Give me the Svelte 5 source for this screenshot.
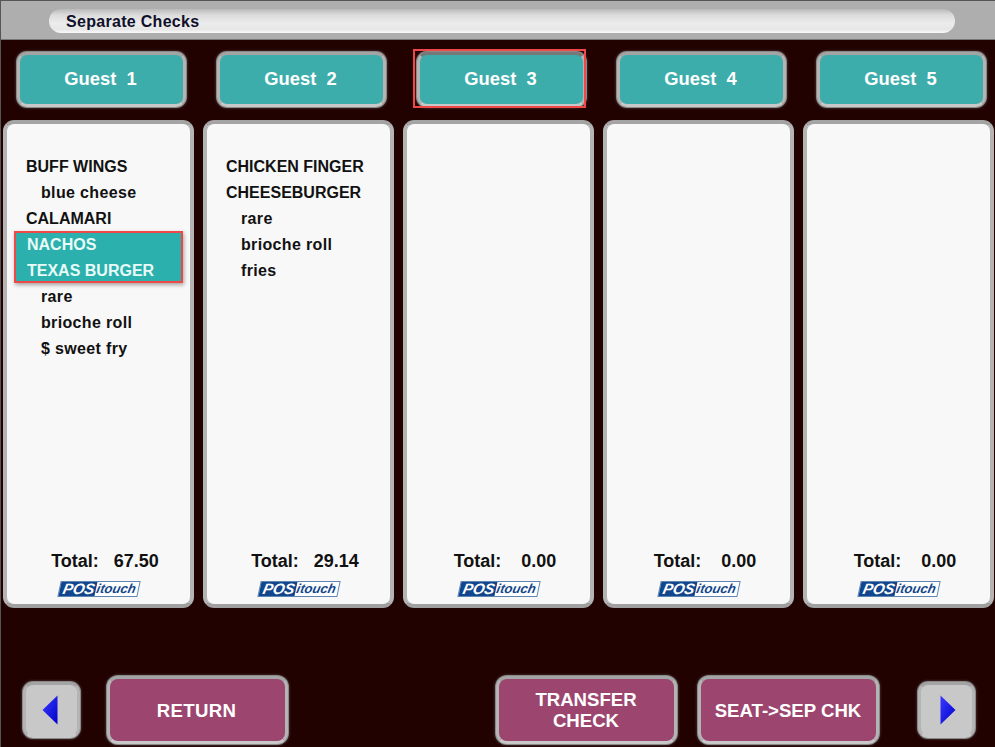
<script lang="ts">
    interface Item { name: string; mod?: boolean; sel?: boolean; }

    const guests: { name: string; total: string; items: Item[] }[] = [
        {
            name: '1', total: '67.50', items: [
                { name: 'BUFF WINGS' },
                { name: 'blue cheese', mod: true },
                { name: 'CALAMARI' },
                { name: 'NACHOS', sel: true },
                { name: 'TEXAS BURGER', sel: true },
                { name: 'rare', mod: true },
                { name: 'brioche roll', mod: true },
                { name: '$ sweet fry', mod: true },
            ]
        },
        {
            name: '2', total: '29.14', items: [
                { name: 'CHICKEN FINGER' },
                { name: 'CHEESEBURGER' },
                { name: 'rare', mod: true },
                { name: 'brioche roll', mod: true },
                { name: 'fries', mod: true },
            ]
        },
        { name: '3', total: '0.00', items: [] },
        { name: '4', total: '0.00', items: [] },
        { name: '5', total: '0.00', items: [] },
    ];

    const activeGuest = '3';
</script>

<div class="screen">
    <header class="titlebar">
        <div class="title">Separate Checks</div>
    </header>

    <div class="guests">
        {#each guests as g}
            <button class="btn guest {g.name === activeGuest ? 'active' : ''}">Guest&nbsp;&nbsp;{g.name}</button>
        {/each}
    </div>

    <div class="cards">
        {#each guests as g}
            <section class="card">
                <div class="items">
                    {#each g.items as item, i}
                        {#if item.sel && g.items[i - 1]?.sel}
                            <!-- drawn with the first selected row -->
                        {:else if item.sel}
                            <div class="selected">
                                {#each g.items.filter((x) => x.sel) as s}
                                    <div class="row">{s.name}</div>
                                {/each}
                            </div>
                        {:else}
                            <div class="row {item.mod ? 'mod' : ''}">{item.name}</div>
                        {/if}
                    {/each}
                </div>
                <div class="total">
                    <span class="lbl">Total:</span>
                    <span class="val">{g.total}</span>
                </div>
                <div class="logo"><span class="pos">POS</span><span class="touch">itouch</span></div>
            </section>
        {/each}
    </div>

    <footer class="actions">
        <button class="btn nav prev" aria-label="Previous">
            <svg width="16" height="30" viewBox="0 0 16 30"><path d="M15.5 0.5 V29.5 L0.5 15 Z" fill="url(#arrowL)" /><defs><linearGradient id="arrowL" x1="0" y1="0" x2="1" y2="1"><stop offset="0" stop-color="#3a3aff" /><stop offset="1" stop-color="#0000c8" /></linearGradient></defs></svg>
        </button>
        <button class="btn action return">RETURN</button>
        <button class="btn action transfer">TRANSFER<br />CHECK</button>
        <button class="btn action seat">SEAT-&gt;SEP CHK</button>
        <button class="btn nav next" aria-label="Next">
            <svg width="16" height="30" viewBox="0 0 16 30"><path d="M0.5 0.5 V29.5 L15.5 15 Z" fill="url(#arrowR)" /><defs><linearGradient id="arrowR" x1="0" y1="0" x2="1" y2="1"><stop offset="0" stop-color="#3a3aff" /><stop offset="1" stop-color="#0000c8" /></linearGradient></defs></svg>
        </button>
    </footer>
</div>

<style>
    :global(body) {
        margin: 0;
        background: #210200;
    }

    .screen {
        width: 995px;
        height: 747px;
        box-sizing: border-box;
        background: #210200;
        border-left: 1px solid #555;
        font-family: "Liberation Sans", Arial, sans-serif;
        overflow: hidden;
        display: flex;
        flex-direction: column;
    }

    .titlebar {
        height: 40px;
        box-sizing: border-box;
        flex: none;
        background: #aeaeae;
        border-top: 1px solid #555;
        border-bottom: 1px solid #777;
        padding: 8px 40px 6px 48px;
    }

    .title {
        height: 100%;
        border-radius: 12px;
        background: linear-gradient(#b9b9b9 0%, #dcdcdc 25%, #ececec 60%, #e6e6e6 85%, #fafafa 100%);
        font-size: 16px;
        font-weight: bold;
        letter-spacing: 0.3px;
        color: #10102a;
        line-height: 25px;
        padding-left: 17px;
    }

    .btn {
        box-sizing: border-box;
        font-family: inherit;
        font-weight: bold;
        padding: 0;
        margin: 0;
        color: #fff;
        border: 3px solid #b4b4b4;
        border-top-color: #a4a4a4;
        border-bottom-color: #c8c8c8;
        box-shadow: 0 0 0 1px #8a8a8a, 0 0 3px 1px rgba(130, 130, 130, 0.5);
    }

    .guests {
        display: flex;
        gap: 31px;
        padding: 12px 0 0 16px;
        flex: none;
    }

    .guest {
        width: 169px;
        height: 55px;
        border-radius: 10px;
        background: #3cadaa;
        font-size: 18.4px;
        padding: 0 2px 2px 0;
        position: relative;
    }

    .guest.active {
        border-top-color: #777;
    }

    .guest.active::after {
        content: "";
        position: absolute;
        left: -7px;
        right: -3px;
        top: -6px;
        bottom: -4px;
        border: 2px solid #f04848;
    }

    .cards {
        display: flex;
        gap: 9px;
        padding: 13px 0 0 2px;
        flex: none;
    }

    .card {
        width: 191px;
        height: 488px;
        box-sizing: border-box;
        background: #f8f8f8;
        border: 4px solid #b4b4b4;
        border-top-color: #a4a4a4;
        border-bottom-color: #a0a0a0;
        border-radius: 11px;
        display: flex;
        flex-direction: column;
        padding: 30px 0 0 19px;
        color: #111;
        font-size: 16px;
        font-weight: bold;
    }

    .items {
        flex: 1;
    }

    .row {
        height: 26px;
        line-height: 26px;
        white-space: nowrap;
    }

    .row.mod {
        padding-left: 15px;
        letter-spacing: 0.35px;
    }

    .selected {
        box-sizing: border-box;
        width: 169px;
        height: 52px;
        margin: -1px 0 1px -12px;
        padding-left: 11px;
        background: #2bb0ad;
        border: 2px solid #f04848;
        box-shadow: 1px 2px 4px rgba(0, 0, 0, 0.35);
        color: #e8fbf7;
    }

    .selected .row:first-child {
        margin-top: -1px;
    }

    .total {
        display: flex;
        justify-content: center;
        gap: 15px;
        height: 20px;
        line-height: 20px;
        padding-right: 6px;
        font-size: 18px;
        margin-bottom: 10px;
    }

    .val {
        min-width: 40px;
        text-align: right;
    }

    .logo {
        align-self: flex-start;
        margin: 0 0 7px 33px;
        height: 16px;
        width: 80px;
        display: flex;
        transform: skewX(-12deg);
        border: 1px solid #5d86b4;
        box-sizing: border-box;
        font-style: italic;
        font-size: 15px;
        line-height: 14px;
        font-weight: bold;
        background: #fff;
    }

    .pos {
        background: #12468c;
        color: #fff;
        padding: 0 1px 0 3px;
    }

    .touch {
        color: #12468c;
        padding-left: 1px;
        font-size: 13px;
    }

    .actions {
        display: flex;
        align-items: center;
        padding: 68px 0 0 22px;
        flex: none;
    }

    .action {
        width: 181px;
        height: 68px;
        border-radius: 11px;
        background: #9c466f;
        font-size: 18.6px;
        line-height: 21px;
        flex: none;
        padding: 0 1px 0 0;
    }

    .nav {
        width: 57px;
        height: 56px;
        border-radius: 10px;
        background: #c8c8c8;
        display: flex;
        align-items: center;
        justify-content: center;
        flex: none;
    }

    .prev { padding-right: 3px; }
    .next { padding-left: 3px; margin-left: 39px; }
    .return { margin-left: 27px; padding-right: 2px; letter-spacing: 0.3px; }
    .transfer { margin-left: 208px; line-height: 21.5px; }
    .seat { margin-left: 21px; }
</style>
